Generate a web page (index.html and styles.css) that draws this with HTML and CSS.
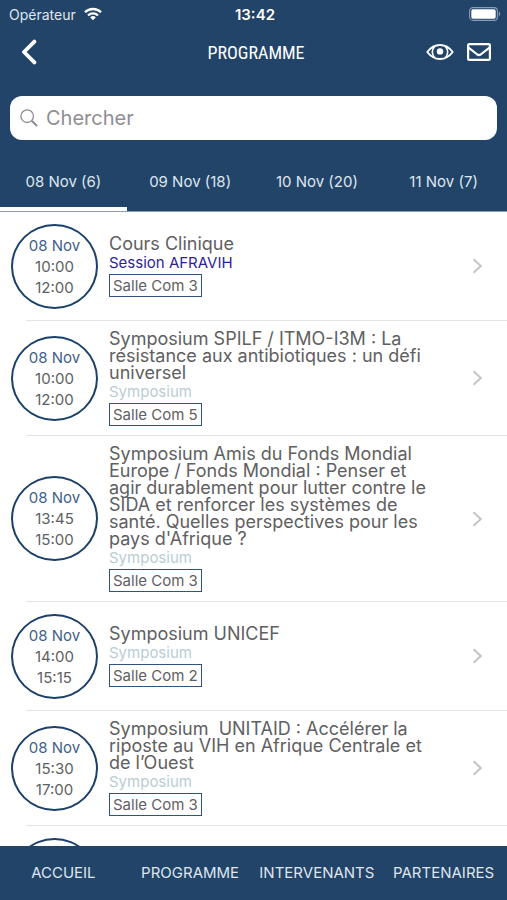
FILE: index.html
```html
<!DOCTYPE html>
<html lang="fr">
<head>
<meta charset="utf-8">
<meta name="viewport" content="width=device-width, initial-scale=1">
<title>Programme</title>
<link rel="stylesheet" href="styles.css">
</head>
<body>
<header class="header">
  <div class="status">
    <div class="status-carrier">
      <span>Opérateur</span>
      <svg width="18" height="14" viewBox="0 0 18 14" aria-hidden="true">
        <g fill="none" stroke="#fff" stroke-width="2.3">
          <path d="M1 5.3a11.4 11.4 0 0 1 16 0"/>
          <path d="M4 8.5a7.1 7.1 0 0 1 10 0"/>
        </g>
        <path d="M9 13.2 6.2 10.4a4 4 0 0 1 5.6 0z" fill="#fff"/>
      </svg>
    </div>
    <span class="status-time">13:42</span>
    <svg class="status-battery" width="32" height="14" viewBox="0 0 32 14" aria-hidden="true">
      <rect x=".6" y=".6" width="27.8" height="12.8" rx="3.4" fill="none" stroke="#8b9db4" stroke-width="1.1"/>
      <rect x="2.3" y="2.3" width="24.4" height="9.4" rx="1.6" fill="#fff"/>
      <path d="M29.8 4.8c1.8.6 1.8 3.8 0 4.4z" fill="#8b9db4"/>
    </svg>
  </div>
  <div class="titlebar">
    <button class="icon-button" type="button" aria-label="Retour">
      <svg width="16" height="26" viewBox="0 0 16 26" aria-hidden="true"><path d="M13.4 2.600 3 13l10.400 10.400" fill="none" stroke="#fff" stroke-width="3.800" stroke-linecap="round" stroke-linejoin="round"/></svg>
    </button>
    <h1 class="title">PROGRAMME</h1>
    <div class="actions">
      <button class="icon-button" type="button" aria-label="Afficher">
        <svg width="28" height="18" viewBox="0 0 28 18" fill="none" stroke="#fff" aria-hidden="true">
          <path d="M1.300 9C4.500 4.700 9 2 14 2S23.500 4.700 26.700 9C23.500 13.300 19 16 14 16S4.500 13.300 1.300 9z" stroke-width="1.900" stroke-linejoin="round"/>
          <path d="M8.600 3.400C5.800 6.800 5.800 11.200 8.600 14.600M19.400 3.400c2.800 3.400 2.800 7.800 0 11.200" stroke-width="1.600"/>
          <circle cx="14" cy="8.400" r="3.200" fill="#fff" stroke="none"/>
        </svg>
      </button>
      <button class="icon-button" type="button" aria-label="Messages">
        <svg width="24" height="18" viewBox="0 0 24 18" fill="none" stroke="#fff" stroke-width="2.200" stroke-linejoin="round" aria-hidden="true">
          <rect x="1.100" y="1.100" width="21.800" height="15.800" rx="1.200"/>
          <path d="M1.500 4.600 10.300 11.500q1.700 1.200 3.400 0L22.500 4.600"/>
        </svg>
      </button>
    </div>
  </div>
  <label class="search">
    <svg width="18" height="18" viewBox="0 0 18 18" fill="none" stroke="#8e8e93" aria-hidden="true">
      <circle cx="7.200" cy="7.200" r="6.300" stroke-width="1.300"/>
      <path d="m11.700 11.700 5.300 5.300" stroke-width="2"/>
    </svg>
    <input class="search-input" type="search" placeholder="Chercher" aria-label="Chercher">
  </label>
  <nav class="tabs" aria-label="Jours">
    <a class="tab tab-active" href="#">08 Nov (6)</a>
    <a class="tab" href="#">09 Nov (18)</a>
    <a class="tab" href="#">10 Nov (20)</a>
    <a class="tab" href="#">11 Nov (7)</a>
  </nav>
</header>

<main class="list">
  <a class="row" href="#">
    <div class="slot"><span class="slot-date">08 Nov</span><span>10:00</span><span>12:00</span></div>
    <div class="session">
      <h2 class="session-title">Cours Clinique</h2>
      <p class="session-type session-type-special">Session AFRAVIH</p>
      <span class="room">Salle Com 3</span>
    </div>
    <svg class="chevron" width="11" height="16" viewBox="0 0 11 16" aria-hidden="true"><path d="m1.500 1.300 7.300 6.700-7.300 6.700"/></svg>
  </a>
  <a class="row" href="#">
    <div class="slot"><span class="slot-date">08 Nov</span><span>10:00</span><span>12:00</span></div>
    <div class="session">
      <h2 class="session-title">Symposium SPILF / ITMO-I3M : La résistance aux antibiotiques : un défi universel</h2>
      <p class="session-type">Symposium</p>
      <span class="room">Salle Com 5</span>
    </div>
    <svg class="chevron" width="11" height="16" viewBox="0 0 11 16" aria-hidden="true"><path d="m1.500 1.300 7.300 6.700-7.300 6.700"/></svg>
  </a>
  <a class="row" href="#">
    <div class="slot"><span class="slot-date">08 Nov</span><span>13:45</span><span>15:00</span></div>
    <div class="session">
      <h2 class="session-title">Symposium Amis du Fonds Mondial Europe / Fonds Mondial : Penser et agir durablement pour lutter contre le SIDA et renforcer les systèmes de santé. Quelles perspectives pour les pays d'Afrique ?</h2>
      <p class="session-type">Symposium</p>
      <span class="room">Salle Com 3</span>
    </div>
    <svg class="chevron" width="11" height="16" viewBox="0 0 11 16" aria-hidden="true"><path d="m1.500 1.300 7.300 6.700-7.300 6.700"/></svg>
  </a>
  <a class="row" href="#">
    <div class="slot"><span class="slot-date">08 Nov</span><span>14:00</span><span>15:15</span></div>
    <div class="session">
      <h2 class="session-title">Symposium UNICEF</h2>
      <p class="session-type">Symposium</p>
      <span class="room">Salle Com 2</span>
    </div>
    <svg class="chevron" width="11" height="16" viewBox="0 0 11 16" aria-hidden="true"><path d="m1.500 1.300 7.300 6.700-7.300 6.700"/></svg>
  </a>
  <a class="row" href="#">
    <div class="slot"><span class="slot-date">08 Nov</span><span>15:30</span><span>17:00</span></div>
    <div class="session">
      <h2 class="session-title">Symposium&nbsp; UNITAID : Accélérer la riposte au VIH en Afrique Centrale et de l’Ouest</h2>
      <p class="session-type">Symposium</p>
      <span class="room">Salle Com 3</span>
    </div>
    <svg class="chevron" width="11" height="16" viewBox="0 0 11 16" aria-hidden="true"><path d="m1.500 1.300 7.300 6.700-7.300 6.700"/></svg>
  </a>
  <div class="row">
    <div class="slot"></div>
  </div>
</main>

<nav class="bottom" aria-label="Navigation">
  <a class="bottom-link" href="#">ACCUEIL</a>
  <a class="bottom-link" href="#">PROGRAMME</a>
  <a class="bottom-link" href="#">INTERVENANTS</a>
  <a class="bottom-link" href="#">PARTENAIRES</a>
</nav>
</body>
</html>
```
FILE: styles.css
```css
* { box-sizing: border-box; }

:root {
  --navy: #224469;
  --ring: #1b406b;
  --text: #606062;
}

body {
  margin: 0;
  height: 100vh;
  display: flex;
  flex-direction: column;
  background: #fff;
  color: var(--text);
  font-family: Inter, "Liberation Sans", sans-serif;
}

h1, h2, p { margin: 0; font-weight: 400; }
a { color: inherit; text-decoration: none; }
svg { display: block; flex: none; }

.header {
  flex: none;
  background: var(--navy);
  color: #fff;
  border-bottom: 1px solid #8b9db4;
}

.status {
  display: grid;
  grid-template-columns: 1fr auto 1fr;
  align-items: center;
  height: 28px;
  padding: 0 6px 0 9px;
  font-size: 14px;
}
.status-carrier { display: flex; align-items: center; gap: 8px; color: #dfe6ee; }
.status-time { font-size: 15px; font-weight: 600; }
.status-battery { justify-self: end; }

.titlebar {
  display: grid;
  grid-template-columns: 1fr auto 1fr;
  align-items: center;
  height: 48px;
  padding: 0 16px 0 21px;
}
.title {
  font-family: "Liberation Sans Narrow", "Roboto Condensed", "Liberation Sans", sans-serif;
  font-size: 18px;
  font-weight: 400;
}
.icon-button {
  display: flex;
  justify-self: start;
  padding: 0;
  border: 0;
  background: none;
}
.actions { display: flex; align-items: center; justify-content: flex-end; gap: 13px; }

.search {
  display: flex;
  align-items: center;
  gap: 8px;
  height: 44px;
  margin: 20px 10px 0;
  padding: 0 10px;
  border-radius: 12px;
  background: #fff;
}
.search-input {
  flex: 1;
  min-width: 0;
  padding: 0;
  border: 0;
  outline: 0;
  background: none;
  font: inherit;
  font-size: 20px;
}
.search-input::placeholder { color: #8e8e93; opacity: 1; }

.tabs, .bottom { display: grid; grid-template-columns: repeat(4, 1fr); }
.tab {
  height: 71px;
  padding-top: 32px;
  border-bottom: 4px solid transparent;
  color: #dfe6ee;
  font-size: 15px;
  line-height: 20px;
  text-align: center;
}
.tab-active { border-bottom-color: #fff; }

.list {
  flex: 1;
  min-height: 0;
  overflow-y: auto;
  scrollbar-width: none;
}
.row {
  position: relative;
  display: flex;
  align-items: center;
  gap: 11px;
  min-height: 109px;
  padding: 9px 24px 10px 11px;
}
.row::after {
  content: "";
  position: absolute;
  inset: auto 0 0 26px;
  height: 1px;
  background: #e4e4e6;
}
.slot {
  flex: none;
  display: flex;
  flex-direction: column;
  align-items: center;
  justify-content: center;
  width: 87px;
  height: 85px;
  border: 2px solid var(--ring);
  border-radius: 50%;
  font-size: 15px;
  line-height: 21px;
}
.slot-date { color: #3f5f8a; }
.session { flex: 1; min-width: 0; }
.session-title { max-width: 332px; font-size: 18px; line-height: 17px; }
.session-type { color: #b9cdd4; font-size: 15px; line-height: 22px; }
.session-type-special { color: #2d1fa0; }
.room {
  display: block;
  width: fit-content;
  padding: 1px 3px;
  border: 1px solid #2f527e;
  font-size: 15px;
  line-height: 19px;
}
.chevron { fill: none; stroke: #c4c4c8; stroke-width: 2; }

.bottom {
  flex: none;
  background: var(--navy);
  color: #dfe6ee;
  font-size: 15px;
  line-height: 54px;
  text-align: center;
}
.bottom-link { white-space: nowrap; }
```
